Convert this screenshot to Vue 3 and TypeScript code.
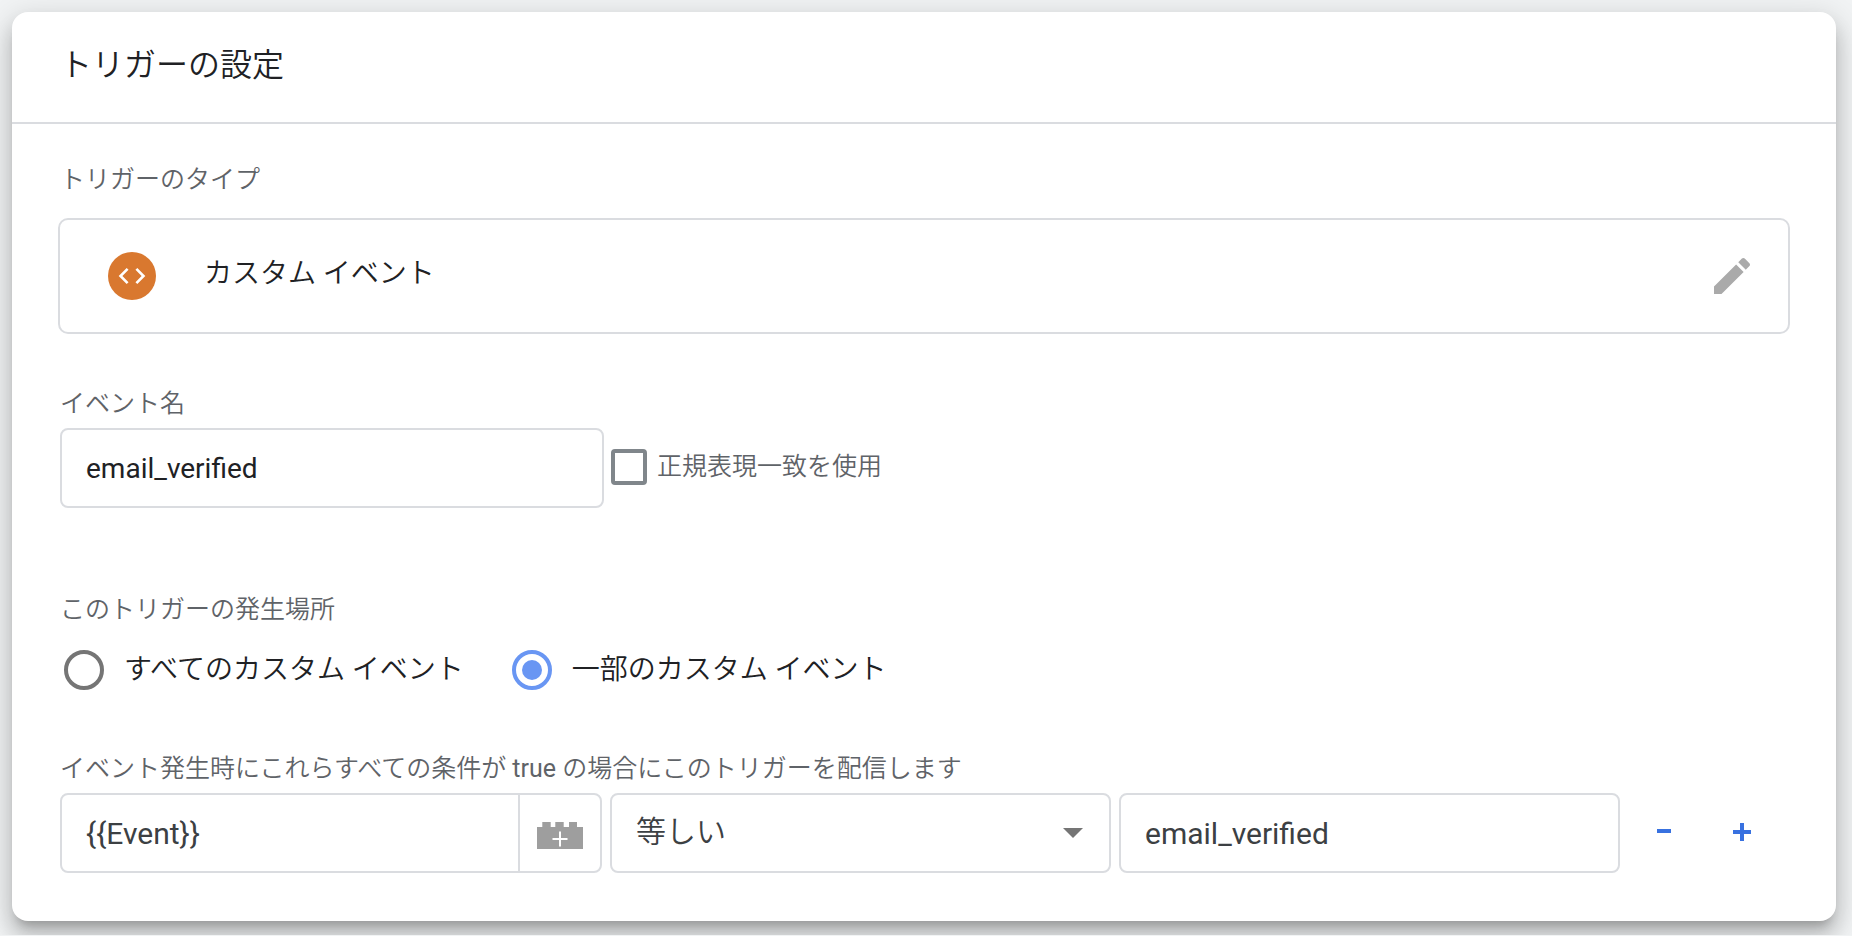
<script setup lang="ts">
import { ref } from 'vue'

interface Scope {
  value: string
  label: string
}

const eventName = ref('email_verified')
const useRegex = ref(false)
const scope = ref('some')
const variable = ref('{{Event}}')
const operator = ref('equals')
const operand = ref('email_verified')

const scopes: Scope[] = [
  { value: 'all', label: 'すべてのカスタム イベント' },
  { value: 'some', label: '一部のカスタム イベント' },
]
</script>

<template>
  <main class="card">
    <header class="card-header">
      <h1>トリガーの設定</h1>
    </header>

    <div class="card-body">
      <h2 class="label">トリガーのタイプ</h2>
      <section class="type-box">
        <span class="type-icon">
          <svg viewBox="0 0 24 24" aria-hidden="true">
            <path d="M9.4 16.6L4.8 12l4.6-4.6L8 6l-6 6 6 6 1.4-1.4zm5.2 0l4.6-4.6-4.6-4.6L16 6l6 6-6 6-1.4-1.4z" />
          </svg>
        </span>
        <span class="type-name">カスタム イベント</span>
        <button class="edit" type="button" aria-label="編集">
          <svg viewBox="0 0 24 24" aria-hidden="true">
            <path d="M3 17.25V21h3.75L17.81 9.94l-3.75-3.75L3 17.25zM20.71 7.04c.39-.39.39-1.02 0-1.41l-2.34-2.34c-.39-.39-1.02-.39-1.41 0l-1.83 1.83 3.75 3.75 1.83-1.83z" />
          </svg>
        </button>
      </section>

      <label class="label name-label" for="event-name">イベント名</label>
      <div class="name-row">
        <input id="event-name" v-model="eventName" class="field name-field" type="text" />
        <label class="check">
          <input v-model="useRegex" type="checkbox" />
          <span>正規表現一致を使用</span>
        </label>
      </div>

      <fieldset class="scope">
        <legend class="label">このトリガーの発生場所</legend>
        <div class="scope-row">
          <label v-for="s in scopes" :key="s.value" class="radio">
            <input v-model="scope" type="radio" name="scope" :value="s.value" />
            <span>{{ s.label }}</span>
          </label>
        </div>
      </fieldset>

      <h2 class="label">イベント発生時にこれらすべての条件が <span class="latin">true</span> の場合にこのトリガーを配信します</h2>
      <div class="condition">
        <div class="field variable">
          <input v-model="variable" type="text" aria-label="変数" />
          <button type="button" aria-label="変数を選択">
            <svg viewBox="0 0 46 27" aria-hidden="true">
              <path fill="#9e9e9e" d="M0 5h5.3V0h8.4v5h4.6V0h8.4v5h5.3V0h8v5h6v22H0z" />
              <path fill="none" stroke="#fff" stroke-width="2" d="M23 9.500v15M15.500 17h15" />
            </svg>
          </button>
        </div>
        <div class="select-wrap">
          <select v-model="operator" class="field" aria-label="演算子">
            <option value="equals">等しい</option>
          </select>
          <svg class="caret" viewBox="0 0 20 10" aria-hidden="true"><path d="M0 0h20L10 10z" /></svg>
        </div>
        <input v-model="operand" class="field" type="text" aria-label="値" />
        <div class="actions">
          <button type="button" aria-label="条件を削除">
            <svg viewBox="0 0 20 20" aria-hidden="true"><path d="M3 6h14v4H3z" /></svg>
          </button>
          <button type="button" aria-label="条件を追加">
            <svg viewBox="0 0 20 20" aria-hidden="true"><path d="M1 7h7V0h4v7h7v4h-7v7H8v-7H1z" /></svg>
          </button>
        </div>
      </div>
    </div>
  </main>
</template>

<style>
html {
  min-height: 100%;
  background: #f1f3f4;
}
</style>

<style scoped>
* {
  box-sizing: border-box;
}

.card {
  margin: 12px 16px 14px 12px;
  background: #fff;
  border-radius: 16px;
  box-shadow:
    0 10px 10px -6px rgba(0, 0, 0, 0.2),
    0 16px 20px 2px rgba(0, 0, 0, 0.14),
    0 6px 28px 4px rgba(0, 0, 0, 0.12);
  color: #202124;
  font-family: Roboto, "Noto Sans CJK JP", sans-serif;
  font-size: 28px;
  font-weight: 400;
}

.card-header {
  height: 112px;
  padding: 33px 48px;
  border-bottom: 2px solid #dadce0;
}

h1 {
  margin: 0;
  font-size: 32px;
  font-weight: 350;
  line-height: 40px;
}

.card-body {
  padding: 40px 46px 48px;
}

.label {
  display: block;
  margin: 0;
  padding: 0 2px;
  color: #5f6368;
  font-size: 25px;
  font-weight: 350;
  line-height: 32px;
}

.latin {
  font-weight: 400;
}

.type-box {
  display: flex;
  align-items: center;
  height: 116px;
  margin-top: 22px;
  padding: 0 32px 0 48px;
  border: 2px solid #dadce0;
  border-radius: 10px;
}

.type-icon {
  display: flex;
  align-items: center;
  justify-content: center;
  width: 48px;
  height: 48px;
  border-radius: 50%;
  background: #d9782f;
}

.type-icon svg {
  width: 32px;
  height: 32px;
  fill: #fff;
}

.type-name {
  flex: 1;
  margin-left: 48px;
  padding-bottom: 10px;
  font-weight: 350;
}

button {
  display: flex;
  align-items: center;
  justify-content: center;
  padding: 0;
  border: 0;
  background: none;
  cursor: pointer;
}

.edit svg {
  width: 48px;
  height: 48px;
  fill: #aaa;
}

.name-label {
  margin-top: 54px;
}

.name-row {
  display: flex;
  align-items: center;
  margin: 8px 2px 0;
}

.field {
  height: 80px;
  padding: 0 24px;
  border: 2px solid #dadce0;
  border-radius: 8px;
  background: #fff;
  color: #3c4043;
  font: inherit;
}

.name-field {
  width: 544px;
  color: #202124;
}

.check {
  display: flex;
  align-items: center;
  gap: 10px;
  margin-left: 7px;
  padding-bottom: 2px;
  color: #5f6368;
  font-size: 25px;
  font-weight: 350;
}

.check span,
.radio span {
  padding-bottom: 6px;
}

.check input {
  appearance: none;
  width: 36px;
  height: 36px;
  margin: 0;
  border: 4px solid #80868b;
  border-radius: 4px;
}

.check input:checked {
  background: #80868b;
}

.scope {
  margin: 86px 0 0;
  padding: 0;
  border: 0;
}

.scope-row {
  display: flex;
  gap: 48px;
  margin: 24px 6px 63px;
}

.radio {
  display: flex;
  align-items: center;
  gap: 20px;
  height: 40px;
  font-weight: 350;
}

.radio input {
  appearance: none;
  display: grid;
  place-items: center;
  width: 40px;
  height: 40px;
  margin: 0;
  border: 4px solid #757575;
  border-radius: 50%;
}

.radio input:checked {
  border-color: #6996f3;
}

.radio input:checked::before {
  content: "";
  width: 20px;
  height: 20px;
  border-radius: 50%;
  background: #6996f3;
}

.condition {
  display: grid;
  grid-template-columns: minmax(0, 542fr) minmax(0, 501fr) minmax(0, 501fr) 162px;
  gap: 8px;
  margin: 8px 0 0 2px;
  font-size: 30px;
}

.variable {
  display: flex;
  padding: 0;
}

.variable input {
  flex: 1;
  min-width: 0;
  padding: 0 24px;
  border: 0;
  border-radius: 8px;
  background: none;
  color: inherit;
  font: inherit;
}

.variable button {
  width: 82px;
  padding-top: 4px;
  border-left: 2px solid #dadce0;
}

.variable svg {
  width: 46px;
  height: 27px;
}

.select-wrap {
  display: grid;
  align-items: center;
}

.select-wrap select {
  grid-area: 1 / 1;
  width: 100%;
  padding-bottom: 4px;
  appearance: none;
  font-weight: 350;
}

.caret {
  grid-area: 1 / 1;
  justify-self: end;
  width: 20px;
  height: 10px;
  margin-right: 28px;
  fill: #757575;
  pointer-events: none;
}

.actions {
  display: flex;
  align-items: center;
  gap: 38px;
  padding: 0 16px;
}

.actions button {
  width: 40px;
  height: 40px;
}

.actions svg {
  width: 20px;
  height: 20px;
  fill: #3871e0;
}
</style>
